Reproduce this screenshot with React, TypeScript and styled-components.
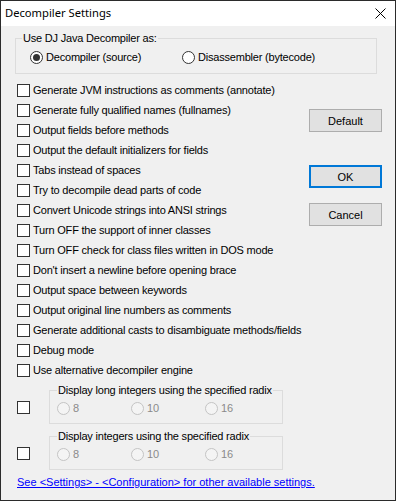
import styled, { createGlobalStyle } from 'styled-components';

const GlobalStyle = createGlobalStyle`
  html, body {
    margin: 0;
    padding: 0;
    background: #ffffff;
  }
`;

const Window = styled.div`
  box-sizing: border-box;
  width: 396px;
  height: 501px;
  border: 1px solid #2b2b2b;
  background: #f0f0f0;
  display: flex;
  flex-direction: column;
  overflow: hidden;
  font-family: "Liberation Sans", Arial, sans-serif;
  font-size: 11px;
  line-height: 13px;
  letter-spacing: -0.2px;
  color: #000;
`;

const TitleBar = styled.div`
  height: 25px;
  flex-shrink: 0;
  background: #ffffff;
  display: flex;
  align-items: center;
  justify-content: space-between;
  padding-left: 4px;
`;

const Title = styled.span`
  font-family: "Noto Sans", "Open Sans", sans-serif;
  font-size: 11.2px;
  letter-spacing: 0;
  line-height: 16px;
  margin-top: -1px;
`;

const CloseButton = styled.div`
  width: 30px;
  height: 25px;
  display: flex;
  align-items: center;
  justify-content: center;
`;

const Body = styled.div`
  flex: 1;
  display: flex;
  flex-direction: column;
  padding-top: 6px;
`;

const GroupBox = styled.fieldset<{ $pad: number }>`
  margin: 0;
  padding: 0 0 0 ${(p) => p.$pad}px;
  border: 1px solid #dcdcdc;
  min-width: 0;
  box-sizing: border-box;
`;

const GroupTitle = styled.legend`
  padding: 0 1px;
  font-size: 11px;
  line-height: 13px;
  white-space: nowrap;
`;

const ModeGroup = styled(GroupBox)`
  margin: 0 18px 0 14px;
  height: 42px;
`;

const RadioRow = styled.div<{ $top: number; $left: number }>`
  display: flex;
  margin-top: ${(p) => p.$top}px;
  padding-left: ${(p) => p.$left}px;
`;

const RadioItem = styled.label<{ $width: number; $disabled?: boolean }>`
  display: flex;
  align-items: center;
  gap: 3px;
  width: ${(p) => p.$width}px;
  height: 13px;
  white-space: nowrap;
  color: ${(p) => (p.$disabled ? '#8a8a8a' : '#000')};
`;

const RadioCircle = styled.span<{ $checked?: boolean; $disabled?: boolean }>`
  box-sizing: border-box;
  width: 13px;
  height: 13px;
  flex-shrink: 0;
  border-radius: 50%;
  border: 1px solid ${(p) => (p.$disabled ? '#c4c4c4' : '#333333')};
  background: ${(p) => (p.$disabled ? '#f4f4f4' : '#ffffff')};
  display: flex;
  align-items: center;
  justify-content: center;

  &::after {
    content: '';
    display: ${(p) => (p.$checked ? 'block' : 'none')};
    width: 7px;
    height: 7px;
    border-radius: 50%;
    background: #333333;
  }
`;

const Main = styled.div`
  display: flex;
  margin-top: 6px;
`;

const OptionList = styled.div`
  display: flex;
  flex-direction: column;
  padding-left: 16px;
`;

const OptionRow = styled.label`
  display: flex;
  align-items: center;
  gap: 3px;
  height: 20px;
  white-space: nowrap;
`;

const CheckBox = styled.span<{ $top?: number }>`
  box-sizing: border-box;
  width: 13px;
  height: 13px;
  flex-shrink: 0;
  border: 1px solid #333333;
  background: #ffffff;
  margin-top: ${(p) => p.$top ?? 0}px;
`;

const ButtonColumn = styled.div`
  margin-left: auto;
  margin-right: 13px;
  width: 73px;
  display: flex;
  flex-direction: column;
`;

const DialogButton = styled.button<{ $top: number; $default?: boolean }>`
  box-sizing: border-box;
  width: 73px;
  height: 23px;
  margin-top: ${(p) => p.$top}px;
  padding: 0;
  background: #e1e1e1;
  border: ${(p) => (p.$default ? '2px solid #0078d7' : '1px solid #adadad')};
  font-family: "Liberation Sans", Arial, sans-serif;
  font-size: 11px;
  color: #000;
`;

const RadixRow = styled.div<{ $top: number }>`
  display: flex;
  align-items: flex-start;
  margin-top: ${(p) => p.$top}px;
  padding-left: 16px;
`;

const RadixGroup = styled(GroupBox)`
  margin-left: 19px;
  width: 234px;
  height: 40px;
`;

const Footer = styled.a`
  align-self: flex-start;
  margin: 6px 0 0 16px;
  color: #0000ff;
  letter-spacing: 0;
  text-decoration: underline;
  cursor: pointer;
`;

const options = [
  'Generate JVM instructions as comments (annotate)',
  'Generate fully qualified names (fullnames)',
  'Output fields before methods',
  'Output the default initializers for fields',
  'Tabs instead of spaces',
  'Try to decompile dead parts of code',
  'Convert Unicode strings into ANSI strings',
  'Turn OFF the support of inner classes',
  'Turn OFF check for class files written in DOS mode',
  "Don't insert a newline before opening brace",
  'Output space between keywords',
  'Output original line numbers as comments',
  'Generate additional casts to disambiguate methods/fields',
  'Debug mode',
  'Use alternative decompiler engine',
];

const radixGroups = [
  { title: 'Display long integers using the specified radix', top: 4 },
  { title: 'Display integers using the specified radix', top: 6 },
];

const CloseIcon = () => (
  <svg width="11" height="11" viewBox="0 0 11 11">
    <path d="M0.5 0.5 L10.5 10.5 M10.5 0.5 L0.5 10.5" stroke="#000" strokeWidth="1" fill="none" />
  </svg>
);

export default function App() {
  return (
    <>
      <GlobalStyle />
      <Window>
        <TitleBar>
          <Title>Decompiler Settings</Title>
          <CloseButton>
            <CloseIcon />
          </CloseButton>
        </TitleBar>
        <Body>
          <ModeGroup $pad={6}>
            <GroupTitle>Use DJ Java Decompiler as:</GroupTitle>
            <RadioRow $top={6} $left={8}>
              <RadioItem $width={152}>
                <RadioCircle $checked />
                Decompiler (source)
              </RadioItem>
              <RadioItem $width={180}>
                <RadioCircle />
                Disassembler (bytecode)
              </RadioItem>
            </RadioRow>
          </ModeGroup>

          <Main>
            <OptionList>
              {options.map((o) => (
                <OptionRow key={o}>
                  <CheckBox />
                  {o}
                </OptionRow>
              ))}
            </OptionList>
            <ButtonColumn>
              <DialogButton $top={29}>Default</DialogButton>
              <DialogButton $top={33} $default>
                OK
              </DialogButton>
              <DialogButton $top={15}>Cancel</DialogButton>
            </ButtonColumn>
          </Main>

          {radixGroups.map((g) => (
            <RadixRow key={g.title} $top={g.top}>
              <CheckBox $top={17} />
              <RadixGroup $pad={7}>
                <GroupTitle>{g.title}</GroupTitle>
                <RadioRow $top={5} $left={0}>
                  {['8', '10', '16'].map((r) => (
                    <RadioItem key={r} $width={74} $disabled>
                      <RadioCircle $disabled />
                      {r}
                    </RadioItem>
                  ))}
                </RadioRow>
              </RadixGroup>
            </RadixRow>
          ))}

          <Footer>See &lt;Settings&gt; - &lt;Configuration&gt; for other available settings.</Footer>
        </Body>
      </Window>
    </>
  );
}
